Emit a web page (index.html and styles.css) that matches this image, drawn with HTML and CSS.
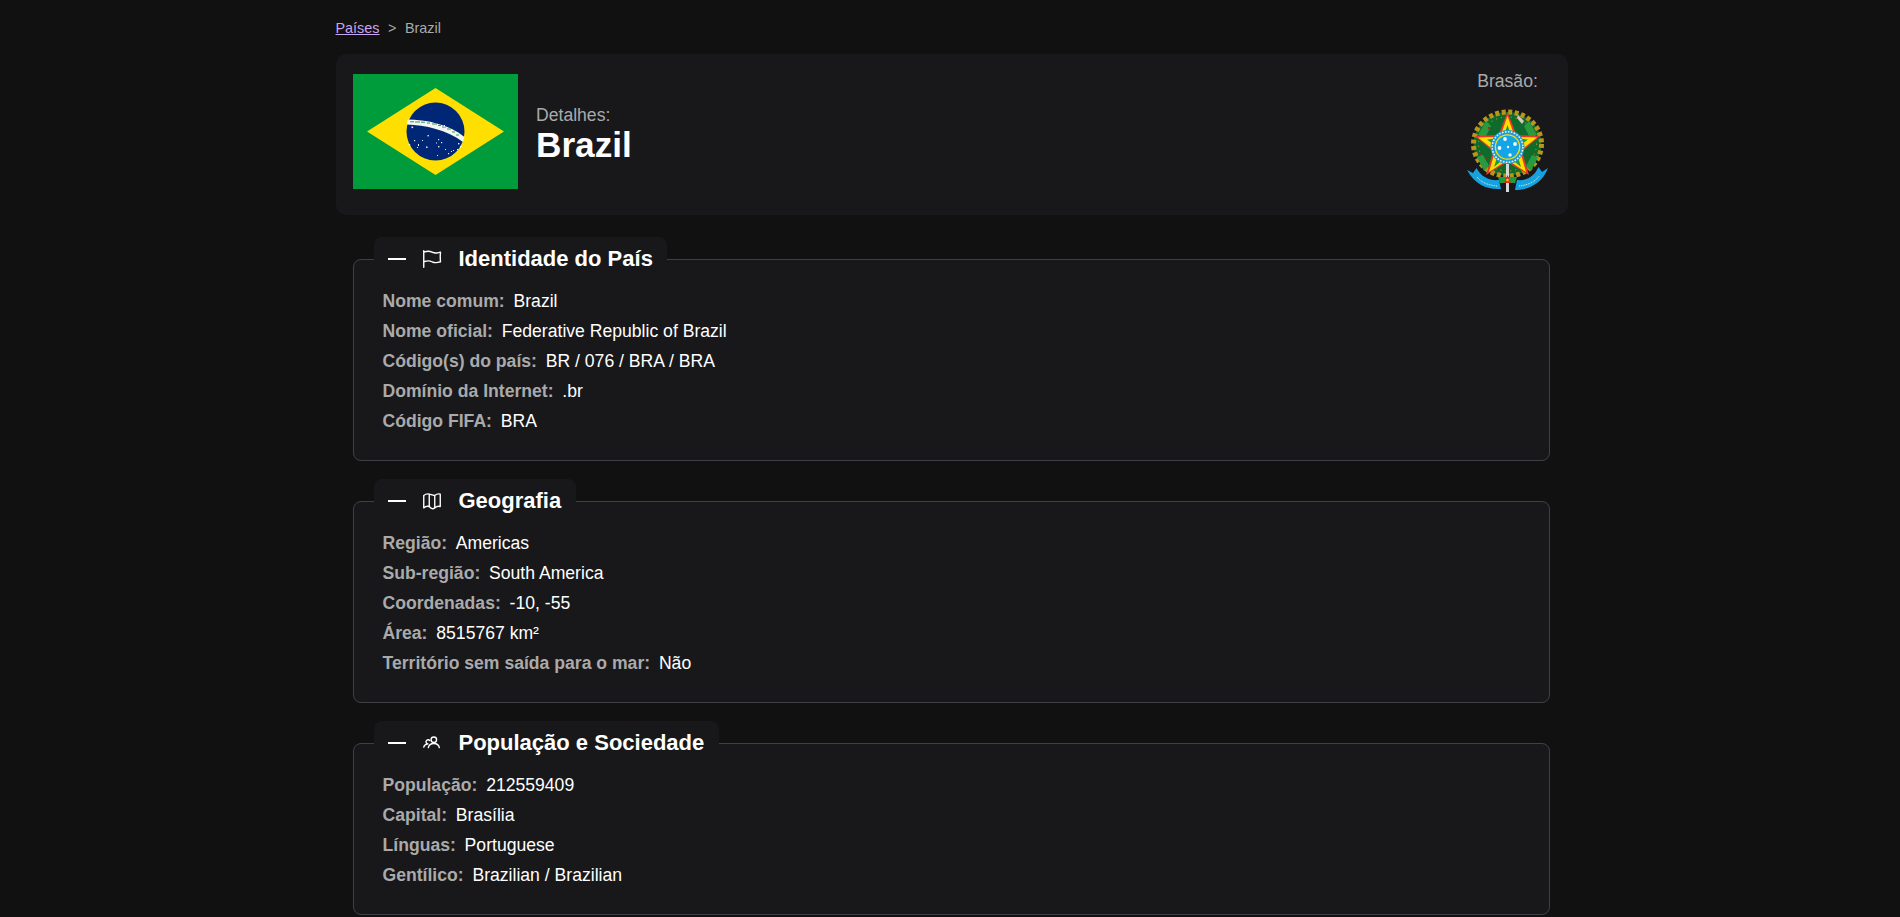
FILE: index.html
```html
<!DOCTYPE html>
<html lang="pt-BR">
<head>
    <meta charset="UTF-8">
    <meta name="viewport" content="width=device-width, initial-scale=1.0">
    <title>Brazil - Detalhes</title>
    <link rel="stylesheet" href="styles.css">
</head>
<body>
    <div class="pagina">
        <nav class="breadcrumb">
            <a href="#">Países</a>
            <span class="separador">&gt;</span>
            <span>Brazil</span>
        </nav>

        <!-- Cabeçalho com bandeira e brasão -->
        <header class="cabecalho">
            <svg class="bandeira" viewBox="0 0 165 115" role="img" aria-label="Bandeira do Brasil">
                <rect width="165" height="115" fill="#009b3a"/>
                <polygon points="14,57.5 82.5,14 151,57.5 82.5,101" fill="#fedf00"/>
                <circle cx="82.5" cy="57.5" r="29" fill="#002776"/>
                <path d="M54.5 45.5 C72 45.5 96 50 111.5 63 L110 68 C94 56 72 51 54 50.5 Z" fill="#f4f6f2"/>
                <path d="M57 47.8h4M62 48h5M68 48.2h4M74 49h3M79 50h5M85 51.5h3M89 53h4M94 55h4M99 58h3M103 61h3" stroke="#2f9a58" stroke-width="1" fill="none"/>
                <g fill="#e8ecf4">
                    <rect x="58.5" y="52.5" width="1.6" height="1.6"/>
                    <rect x="74.5" y="61" width="1.4" height="1.4"/>
                    <rect x="55.5" y="70" width="1.6" height="1.6"/>
                    <rect x="61" y="66" width="1.2" height="1.2"/>
                    <rect x="65" y="70" width="1" height="2"/>
                    <rect x="69" y="66" width="1" height="1"/>
                    <rect x="64" y="73" width="1" height="1"/>
                    <rect x="73" y="72.5" width="1.6" height="1.4"/>
                    <rect x="83" y="68.5" width="1" height="1"/>
                    <rect x="85" y="65" width="1.2" height="1.2"/>
                    <rect x="88" y="68" width="1.2" height="1.2"/>
                    <rect x="85" y="72" width="1.4" height="1.4"/>
                    <rect x="92" y="75" width="1" height="1"/>
                    <rect x="95" y="79" width="1.2" height="1.2"/>
                    <rect x="98" y="77" width="1" height="1"/>
                    <rect x="100" y="76" width="1" height="1"/>
                    <rect x="105" y="69" width="1.4" height="1.4"/>
                    <rect x="107" y="72" width="1" height="2"/>
                    <rect x="104" y="75" width="1" height="1"/>
                    <rect x="108" y="72" width="1" height="1"/>
                    <rect x="84" y="81" width="1" height="1"/>
                    <rect x="91" y="51" width="1" height="2"/>
                    <rect x="90" y="55" width="1" height="1"/>
                </g>
            </svg>

            <div class="titulo">
                <span class="detalhes">Detalhes:</span>
                <h1>Brazil</h1>
            </div>

            <div class="brasao">
                <span class="brasao-rotulo">Brasão:</span>
                <svg class="brasao-img" viewBox="0 0 84 92" role="img" aria-label="Brasão do Brasil">
                    <!-- coroa de folhas -->
                    <ellipse cx="41.5" cy="37" rx="34" ry="32" fill="#0f6b2c" stroke="#b8961c" stroke-width="5" stroke-dasharray="4 2.500"/>
                    <ellipse cx="41.5" cy="37" rx="29" ry="27" fill="none" stroke="#c9a41e" stroke-width="1" stroke-dasharray="1 4"/>
                    <path d="M12 28 l8-14 5 5-6 12z M71 28 l-8-14-5 5 6 12z M11 50 l7 14 5-5-6-11z M72 50 l-7 14-5-5 6-11z" fill="#2a9a40"/>
                    <circle cx="23" cy="21" r="1.2" fill="#a52a20"/>
                    <circle cx="14" cy="47" r="1.2" fill="#a52a20"/>
                    <circle cx="20" cy="52" r="1" fill="#a52a20"/>
                    <path d="M52 8l6 6-2 3-5-6z" fill="#d8c8c0"/>
                    <!-- estrela -->
                    <polygon points="41.5,5 50.5,28 74,29 56,44.5 63,68 41.5,55 20,68 27,44.5 9,29 32.5,28" fill="#e83a24"/>
                    <polygon points="41.5,9 48.8,29.8 71,30.5 54,44 60,65 41.5,53 23,65 29,44 12,30.5 34.2,29.8" fill="#fedf00"/>
                    <polygon points="41.5,18 46,31 62,32.5 49.5,42 55,60 41.5,49 28,60 33.5,42 21,32.5 37,31" fill="#1f9a3c"/>
                    <!-- circulo central -->
                    <circle cx="41.5" cy="40" r="17" fill="#1e9bd8"/>
                    <circle cx="41.5" cy="40" r="15.3" fill="none" stroke="#f4f4f0" stroke-width="1.5" stroke-dasharray="1.6 1.4"/>
                    <circle cx="41.5" cy="40" r="12.8" fill="#fedf00"/>
                    <circle cx="41.5" cy="40" r="11.5" fill="#12a5e8"/>
                    <g fill="#f4f8fc">
                        <circle cx="39" cy="32" r="1.9"/>
                        <circle cx="49" cy="37" r="1.9"/>
                        <circle cx="42" cy="40" r="1.2"/>
                        <circle cx="33.5" cy="41" r="1.9"/>
                        <circle cx="44" cy="48" r="1.7"/>
                    </g>
                    <!-- espada -->
                    <rect x="40" y="57" width="3" height="28" fill="#d8d8d8"/>
                    <!-- fita -->
                    <path d="M1 63 L7 66 L10.5 61 C15 70 24 74 33 73 L35 82 C22 83 9 78 1 63Z" fill="#14a3e0"/>
                    <path d="M82 61 L76 65 L72.5 60 C68 70 60 74 51 73 L49 83 C62 83 76 77 82 61Z" fill="#14a3e0"/>
                    <path d="M11 70 C16 76 22 78 31 79 M53 79 C62 78 69 75 73 69" stroke="#e8f4e8" stroke-width="0.9" stroke-dasharray="1 0.8" fill="none"/>
                    <polygon points="32,70 51,70 49,76 34,76" fill="#1f9a3c"/>
                    <polygon points="41.5,68 45,76 38,76" fill="#e02a1c"/>
                    <circle cx="41.5" cy="73" r="1.2" fill="#fedf00"/>
                </svg>
            </div>
        </header>

        <fieldset class="secao">
            <legend class="secao-legenda">
                <svg class="icone-traco" viewBox="0 0 18 2"><rect width="18" height="2" fill="#fff"/></svg>
                <svg class="icone" viewBox="0 0 24 24"><path d="M3 3v1.5M3 21v-6m0 0 2.77-.693a9 9 0 0 1 6.208.682l.108.054a9 9 0 0 0 6.086.71l3.114-.732a48.524 48.524 0 0 1-.005-10.499l-3.11.732a9 9 0 0 1-6.085-.711l-.108-.054a9 9 0 0 0-6.208-.682L3 4.5M3 15V4.5"/></svg>
                <span>Identidade do País</span>
            </legend>
            <div class="linhas">
                <p class="linha"><strong>Nome comum:</strong>Brazil</p>
                <p class="linha"><strong>Nome oficial:</strong>Federative Republic of Brazil</p>
                <p class="linha"><strong>Código(s) do país:</strong>BR / 076 / BRA / BRA</p>
                <p class="linha"><strong>Domínio da Internet:</strong>.br</p>
                <p class="linha"><strong>Código FIFA:</strong>BRA</p>
            </div>
        </fieldset>

        <fieldset class="secao">
            <legend class="secao-legenda">
                <svg class="icone-traco" viewBox="0 0 18 2"><rect width="18" height="2" fill="#fff"/></svg>
                <svg class="icone" viewBox="0 0 24 24"><path d="M3 6Q6 3.500 9 4.500T15 6q3-2.500 6-1.500V18q-3-1-6 1.500T9 18q-3-1-6 1.500ZM9 4.500V18M15 6v13.500"/></svg>
                <span>Geografia</span>
            </legend>
            <div class="linhas">
                <p class="linha"><strong>Região:</strong>Americas</p>
                <p class="linha"><strong>Sub-região:</strong>South America</p>
                <p class="linha"><strong>Coordenadas:</strong>-10, -55</p>
                <p class="linha"><strong>Área:</strong>8515767 km²</p>
                <p class="linha"><strong>Território sem saída para o mar:</strong>Não</p>
            </div>
        </fieldset>

        <fieldset class="secao">
            <legend class="secao-legenda">
                <svg class="icone-traco" viewBox="0 0 18 2"><rect width="18" height="2" fill="#fff"/></svg>
                <svg class="icone" viewBox="0 0 24 24"><circle cx="14" cy="8.500" r="3"/><path d="M9.600 9.300a2.300 2.300 0 1 0-2 3.700M8 17c.5-2.800 3-4.500 6-4.500s5.500 1.700 6 4.500M3 16.500c.4-1.800 1.900-3.200 4-3.300"/></svg>
                <span>População e Sociedade</span>
            </legend>
            <div class="linhas">
                <p class="linha"><strong>População:</strong>212559409</p>
                <p class="linha"><strong>Capital:</strong>Brasília</p>
                <p class="linha"><strong>Línguas:</strong>Portuguese</p>
                <p class="linha"><strong>Gentílico:</strong>Brazilian / Brazilian</p>
            </div>
        </fieldset>
    </div>
</body>
</html>
```

FILE: styles.css
```css
body {
    font-family: "Liberation Sans", Arial, sans-serif;
    background-color: #111111;
    color: #ffffff;
    margin: 0;
    padding: 0;
}

.pagina {
    width: 1232px;
    margin: 0 auto;
    padding-left: 4px;
    padding-top: 20px;
}

.breadcrumb {
    display: flex;
    gap: 8.5px;
    font-size: 14.4px;
    line-height: 16px;
    color: #aaaaaa;
    margin-left: -0.5px;
    margin-bottom: 18px;
}

.breadcrumb a {
    color: #c9a5f0;
}

.cabecalho {
    display: flex;
    align-items: center;
    background-color: #18181b;
    border-radius: 10px;
    padding: 16px 18px 16px 17px;
    margin-bottom: 22px;
}

.bandeira {
    width: 165px;
    height: 115px;
    margin-bottom: 6px;
    flex-shrink: 0;
}

.titulo {
    display: flex;
    flex-direction: column;
    margin-left: 18px;
    margin-bottom: 2px;
}

.detalhes {
    font-size: 17.6px;
    line-height: 22px;
    color: #aaaaaa;
}

.titulo h1 {
    font-size: 35.2px;
    line-height: 38px;
    margin: 0;
}

.brasao {
    margin-left: auto;
    display: flex;
    flex-direction: column;
    align-items: center;
}

.brasao-rotulo {
    font-size: 17.6px;
    line-height: 20px;
    color: #aaaaaa;
    margin-top: 1px;
}

.brasao-img {
    width: 84px;
    height: 92px;
    margin-top: 16px;
    margin-left: 1px;
}

.secao {
    border: 1px solid #3f3f46;
    border-radius: 8px;
    background-color: #18181b;
    margin: 0 18px 18px 17px;
    padding: 0;
    min-width: 0;
}

.secao-legenda {
    display: flex;
    align-items: center;
    height: 44px;
    margin-left: 20px;
    padding: 0 14.5px 0 14px;
    background-color: #18181b;
    border-radius: 8px;
    font-size: 22px;
    font-weight: bold;
}

.icone-traco {
    width: 18px;
    height: 2px;
    margin-right: 15px;
}

.icone {
    width: 22px;
    height: 22px;
    margin-right: 15.5px;
    fill: none;
    stroke: #ffffff;
    stroke-width: 1.5;
    stroke-linecap: round;
    stroke-linejoin: round;
}

.linhas {
    padding: 6px 28.5px 23.5px;
}

.linha {
    margin: 0;
    font-size: 17.6px;
    line-height: 1.7;
}

.linha strong {
    color: #aaaaaa;
    margin-right: 8.8px;
}
```
